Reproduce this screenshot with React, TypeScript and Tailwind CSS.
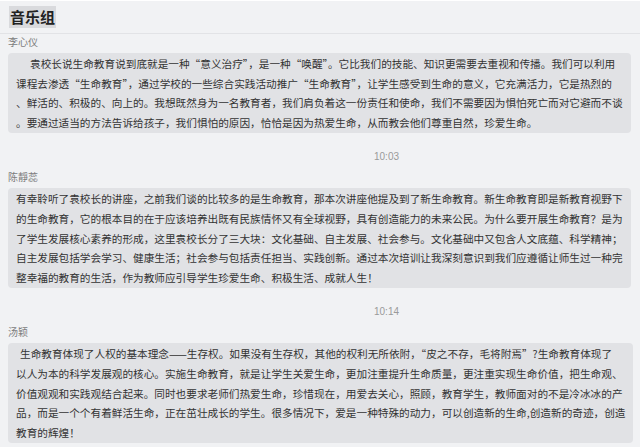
const messages = [
  {
    name: "李心仪",
    lines: [
      "袁校长说生命教育说到底就是一种“意义治疗”，是一种“唤醒”。它比我们的技能、知识更需要去重视和传播。我们可以利用",
      "课程去渗透“生命教育”，通过学校的一些综合实践活动推广“生命教育”，让学生感受到生命的意义，它充满活力，它是热烈的",
      "、鲜活的、积极的、向上的。我想既然身为一名教育者，我们肩负着这一份责任和使命，我们不需要因为惧怕死亡而对它避而不谈",
      "。要通过适当的方法告诉给孩子，我们惧怕的原因，恰恰是因为热爱生命，从而教会他们尊重自然，珍爱生命。",
    ],
    indent: "pl-[14px]",
  },
  {
    time: "10:03",
    name: "陈靜蕊",
    lines: [
      "有幸聆听了袁校长的讲座，之前我们谈的比较多的是生命教育，那本次讲座他提及到了新生命教育。新生命教育即是新教育视野下",
      "的生命教育，它的根本目的在于应该培养出既有民族情怀又有全球视野，具有创造能力的未来公民。为什么要开展生命教育？是为",
      "了学生发展核心素养的形成，这里袁校长分了三大块：文化基础、自主发展、社会参与。文化基础中又包含人文底蕴、科学精神；",
      "自主发展包括学会学习、健康生活；社会参与包括责任担当、实践创新。通过本次培训让我深刻意识到我们应遵循让师生过一种完",
      "整幸福的教育的生活，作为教师应引导学生珍爱生命、积极生活、成就人生！",
    ],
    indent: "",
  },
  {
    time: "10:14",
    name: "汤颖",
    lines: [
      "生命教育体现了人权的基本理念——生存权。如果没有生存权，其他的权利无所依附，“皮之不存，毛将附焉”?生命教育体现了",
      "以人为本的科学发展观的核心。实施生命教育，就是让学生关爱生命，更加注重提升生命质量，更注重实现生命价值，把生命观、",
      "价值观观和实践观结合起来。同时也要求老师们热爱生命，珍惜现在，用爱去关心，照顾，教育学生，教师面对的不是冷冰冰的产",
      "品，而是一个个有着鲜活生命，正在茁壮成长的学生。很多情况下，爱是一种特殊的动力，可以创造新的生命,创造新的奇迹，创造",
      "教育的辉煌！",
    ],
    indent: "pl-[4px]",
  },
];

export default function App() {
  return (
    <div className="w-[640px] h-[447px] overflow-hidden bg-[#f1f2f4] font-['Noto_Sans_CJK_SC',sans-serif] text-[#333]">
      {/* Header */}
      <div className="h-[34px] border-t border-white border-b border-b-[#e2e3e6] flex items-center px-[9px]">
        <h1 className="bg-[#d9dadd] px-[1px] text-[15px] leading-[22px] font-bold text-[#222]">音乐组</h1>
      </div>

      {/* Messages */}
      <div className="flex flex-col pl-[8px]">
        {messages.map((m, i) => (
          <div key={i} className="flex flex-col">
            {m.time && (
              <div className="mt-[17px] pl-[366px] text-[10px] leading-[14px] text-[#9a9a9a] font-['Liberation_Sans',sans-serif]">
                {m.time}
              </div>
            )}
            <div className={`${m.time ? "mt-[6px]" : "mt-[1px]"} text-[10px] leading-[14px] text-[#7d7d7d]`}>{m.name}</div>
            <div className="mt-[4px] w-fit rounded-[4px] bg-[#e1e2e5] px-[8px] py-[1px] text-[10.65px] leading-[19.6px] whitespace-nowrap">
              {m.lines.map((line, j) => (
                <div key={j} className={j === 0 ? m.indent : ""}>
                  {line}
                </div>
              ))}
            </div>
          </div>
        ))}
      </div>
    </div>
  );
}
